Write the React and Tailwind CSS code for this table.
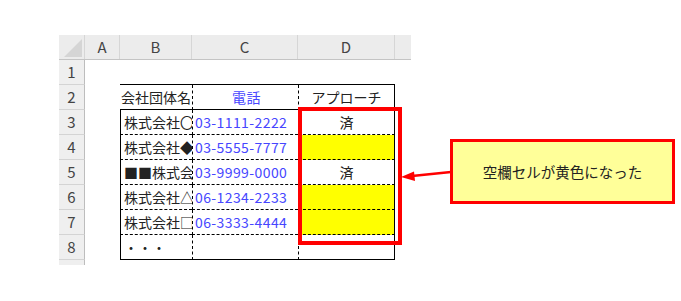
import React from "react";

const jp = { fontFamily: '"Noto Sans CJK JP", "Noto Sans", sans-serif' };

const cols = ["A", "B", "C", "D", ""];

// sheet rows 1..8; b/c/d are the cell texts, fill marks the highlighted blanks
const rows = [
  { n: 1 },
  { n: 2, b: "会社団体名", c: "電話", d: "アプローチ", head: true },
  { n: 3, b: "株式会社〇", c: "03-1111-2222", d: "済" },
  { n: 4, b: "株式会社◆", c: "03-5555-7777", fill: true },
  { n: 5, b: "■■株式会", c: "03-9999-0000", d: "済" },
  { n: 6, b: "株式会社△", c: "06-1234-2233", fill: true },
  { n: 7, b: "株式会社□", c: "06-3333-4444", fill: true },
  { n: 8, b: "・・・" },
];

const colW = ["w-[35px]", "w-[72px]", "w-[106px]", "w-[97px]", "w-[16px]"];

function HeaderRow() {
  return (
    <div className="flex h-[25px] border-b border-[#c4c4c4] bg-[#ececec]">
      <div className="relative w-[26px] border-r border-[#d6d6d6]">
        <svg className="absolute left-[5px] top-[4px]" width="18" height="18" viewBox="0 0 18 18">
          <polygon points="18,0 18,18 0,18" fill="#d5d5d5" />
        </svg>
      </div>
      {cols.map((c, i) => (
        <div
          key={i}
          className={`${colW[i]} flex items-center justify-center border-r border-[#d6d6d6] text-[15px] text-[#444] last:border-r-0`}
        >
          {c}
        </div>
      ))}
    </div>
  );
}

function Row({ r }) {
  const inTable = r.n >= 2;
  const lineB =
    r.n === 1 || r.n === 2 || r.n === 8 ? "[border-bottom-style:solid]" : "[border-bottom-style:dashed]";
  return (
    <div className="flex h-[25px]">
      <div className="flex w-[26px] items-center justify-center border-b border-r border-[#d4d4d4] border-r-[#bdbdbd] bg-[#efefef] text-[15px] text-[#444]">
        {r.n}
      </div>
      <div className="w-[35px]" />
      {/* B: company name, clipped at the column edge */}
      <div
        className={`w-[72px] overflow-hidden whitespace-nowrap border-b border-black ${lineB} ${
          inTable && !r.head ? "border-l pl-[3px]" : "pl-[1px]"
        } flex items-center text-[14px] text-[#222]`}
      >
        {r.b}
      </div>
      {/* C: phone */}
      <div
        className={`w-[106px] overflow-hidden whitespace-nowrap border-b border-black ${lineB} ${
          inTable ? "border-l border-l-black [border-left-style:dashed] pl-[2px]" : ""
        } flex items-center text-[14px] tracking-[0.4px] text-[#4646ff] ${r.head ? "justify-center" : ""}`}
      >
        {r.c}
      </div>
      {/* D: approach status */}
      <div
        className={`w-[97px] border-b border-black ${lineB} ${
          inTable ? "border-l border-r [border-left-style:dashed] [border-right-style:solid]" : ""
        } flex items-center justify-center text-[14px] text-[#222] ${r.fill ? "bg-[#ffff00]" : ""}`}
      >
        {r.d}
      </div>
      <div className="w-[16px]" />
    </div>
  );
}

export default function App() {
  return (
    <div className="relative h-[301px] w-[681px] overflow-hidden bg-white" style={jp}>
      <div className="pl-[59px] pt-[35px]">
        <div className="w-[352px]">
          <HeaderRow />
          {rows.map((r) => (
            <Row key={r.n} r={r} />
          ))}
          <div className="h-[5px] w-[26px] border-r border-[#bdbdbd] bg-[#efefef]" />
        </div>
      </div>

      {/* red frame around the approach column */}
      <div className="absolute left-[298px] top-[107px] h-[138px] w-[104px] border-4 border-[#ff0000]" />

      {/* callout */}
      <div className="absolute left-[450px] top-[139px] flex h-[65px] w-[225px] items-center justify-center border-[3px] border-[#ff0000] bg-[#ffff99] text-[14.5px] text-[#222]">
        空欄セルが黄色になった
      </div>

      <svg className="absolute left-0 top-0" width="681" height="301" viewBox="0 0 681 301">
        <line x1="451" y1="172" x2="412" y2="176" stroke="#ff0000" strokeWidth="2.5" />
        <polygon points="401,177 414,171.5 415,181" fill="#ff0000" />
      </svg>
    </div>
  );
}
